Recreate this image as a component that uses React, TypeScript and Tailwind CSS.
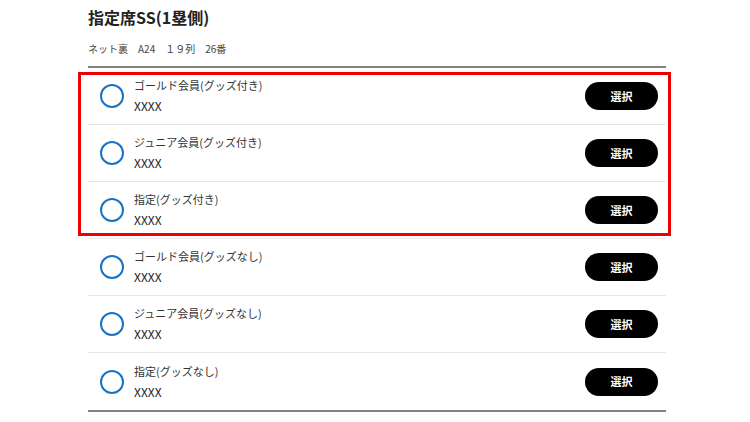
import React from "react";

const rows = [
  "ゴールド会員(グッズ付き)",
  "ジュニア会員(グッズ付き)",
  "指定(グッズ付き)",
  "ゴールド会員(グッズなし)",
  "ジュニア会員(グッズなし)",
  "指定(グッズなし)",
];

export default function App() {
  return (
    <div
      className="relative w-[750px] h-[422px] bg-white overflow-hidden text-[#222]"
      style={{ fontFamily: '"Noto Sans CJK JP", "Noto Sans", sans-serif' }}
    >
      <div className="ml-[88px] w-[578px]">
        <div className="pt-[5px] text-[16px] leading-[24px] font-bold text-[#222]">
          指定席SS(1塁側)
        </div>
        <div className="mt-[13px] text-[10px] leading-[14px] text-[#444]">
          ネット裏　A24　１９列　26番
        </div>
        <div className="mt-[10px] border-t-2 border-[#808080]">
          {rows.map((r, i) => (
            <div
              key={i}
              className={`flex items-center h-[57px] pl-[12px] pr-[8px] ${
                i < rows.length - 1 ? "border-b border-[#e6e6e6]" : ""
              }`}
            >
              <div className="w-[24px] h-[24px] rounded-full border-2 border-[#1a73c1] shrink-0" />
              <div className="ml-[10px] flex flex-col flex-1 -mt-[1px]">
                <div className="text-[11px] leading-[16px] text-[#333]">{r}</div>
                <div className="mt-[5px] text-[12px] leading-[16px] text-[#222]">XXXX</div>
              </div>
              <button className="w-[73px] h-[28px] rounded-full bg-black text-white text-[11px] font-bold flex items-center justify-center">
                選択
              </button>
            </div>
          ))}
        </div>
        <div className="border-t-2 border-[#808080]" />
      </div>
      <div className="absolute left-[78px] top-[72px] w-[593px] h-[164px] border-[3px] border-[#ee0000] pointer-events-none" />
    </div>
  );
}
